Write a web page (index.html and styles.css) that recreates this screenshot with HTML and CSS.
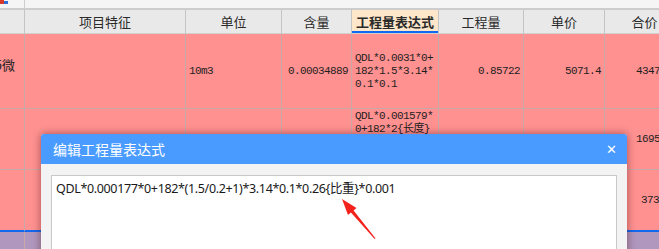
FILE: index.html
```html
<!DOCTYPE html>
<html lang="zh-CN">
<head>
  <meta charset="UTF-8" />
  <title>编辑工程量表达式</title>
  <link rel="stylesheet" href="styles.css">
</head>
<body>
  <!-- Spreadsheet behind the dialog -->
  <div class="sheet">
    <div class="toolbar">
      <div class="tb-cell">
        <svg class="tb-icon" width="9" height="5" viewBox="0 0 9 5">
          <rect x="0" y="0" width="4" height="4" fill="#d83a2a" />
          <rect x="4" y="1" width="4" height="3" fill="#2f6fd8" />
        </svg>
      </div>
      <div class="tb-cell"></div>
    </div>

    <div class="grid head">
      <div class="cell"></div>
      <div class="cell">项目特征</div>
      <div class="cell">单位</div>
      <div class="cell">含量</div>
      <div class="cell active">工程量表达式</div>
      <div class="cell">工程量</div>
      <div class="cell">单价</div>
      <div class="cell">合价</div>
    </div>

    <div class="grid row r1">
      <div class="cell first">5微</div>
      <div class="cell"></div>
      <div class="cell left">10m3</div>
      <div class="cell num">0.00034889</div>
      <div class="cell expr">QDL*0.0031*0+<br>182*1.5*3.14*<br>0.1*0.1</div>
      <div class="cell num">0.85722</div>
      <div class="cell num">5071.4</div>
      <div class="cell total">4347.8</div>
    </div>

    <div class="grid row r2">
      <div class="cell"></div>
      <div class="cell"></div>
      <div class="cell"></div>
      <div class="cell"></div>
      <div class="cell expr top">QDL*0.001579*<br>0+182*2{长度}<br>*3.14*0.1*<br>0.1</div>
      <div class="cell"></div>
      <div class="cell"></div>
      <div class="cell total">16951.2</div>
    </div>

    <div class="grid row r3">
      <div class="cell"></div>
      <div class="cell"></div>
      <div class="cell"></div>
      <div class="cell"></div>
      <div class="cell"></div>
      <div class="cell"></div>
      <div class="cell"></div>
      <div class="cell total late">373.5</div>
    </div>

    <div class="grid row r4">
      <div class="cell"></div>
      <div class="cell"></div>
      <div class="cell"></div>
      <div class="cell"></div>
      <div class="cell"></div>
      <div class="cell"></div>
      <div class="cell"></div>
      <div class="cell"></div>
    </div>
  </div>

  <!-- Edit expression dialog -->
  <div class="dialog">
    <div class="dialog-title">
      <span>编辑工程量表达式</span>
      <span class="close">✕</span>
    </div>
    <div class="dialog-body">
      <div class="editor">QDL*0.000177*0+182*(1.5/0.2+1)*3.14*0.1*0.26{比重}*0.001</div>
    </div>
  </div>

  <!-- Red annotation arrow -->
  <svg class="arrow" width="659" height="249" viewBox="0 0 659 249">
    <polygon fill="#f4221c"
      points="342,199 356.5,208 353.6,210.6 375.6,238.4 374.4,238.8 350.9,212.6 348,215" />
  </svg>
</body>
</html>
```

FILE: styles.css
```css
* {
  margin: 0;
  padding: 0;
  box-sizing: border-box;
}

body {
  width: 659px;
  height: 249px;
  overflow: hidden;
  position: relative;
  background: #f5f5f5;
  font-family: "Noto Sans CJK SC", sans-serif;
  color: #222;
}

/* Sheet */
.sheet {
  width: 659px;
  overflow: hidden;
}

.toolbar {
  display: flex;
  height: 10px;
  background: #f5f5f5;
  border-bottom: 2px solid #cdcdcd;
}
.tb-cell {
  width: 25px;
  border-right: 1px solid #cdcdcd;
  position: relative;
  overflow: hidden;
}
.tb-cell + .tb-cell {
  flex: 1;
  border-right: none;
}
.tb-icon {
  display: block;
}

.grid {
  display: grid;
  grid-template-columns: 25px 161px 96px 70px 87px 85px 81px 80px;
  width: 685px;
}

.cell {
  border-right: 1px solid #c4c4c4;
  border-bottom: 1px solid #c4c4c4;
  overflow: hidden;
  white-space: nowrap;
}

.head {
  height: 24px;
  background: #e9e9e9;
}
.head .cell {
  display: flex;
  align-items: center;
  justify-content: center;
  font-size: 13px;
  color: #2a2a2a;
  border-bottom-color: #cfcfcf;
}
.head .cell.active {
  background: #fde6c9;
  font-weight: bold;
  box-shadow: inset 0 -2px 0 #1268ee;
}

.row {
  background: #ff9191;
  font-family: "Liberation Mono", "Noto Sans CJK SC", monospace;
  font-size: 11px;
  letter-spacing: -0.6px;
  color: #1e1e1e;
}
.row .cell {
  display: flex;
  align-items: center;
  border-color: #c9a8a8;
}
.r1 { height: 75px; }
.r2 { height: 61px; }
.r3 { height: 62px; }
.r3 .cell {
  border-bottom: 2px solid #1268ee;
}
.r4 {
  height: 40px;
  background: #b097bd;
}
.r4 .cell {
  border-bottom: none;
}

.row .first {
  justify-content: flex-end;
  padding: 0 9px 14px 0;
  font-family: "Noto Sans CJK SC", sans-serif;
  font-size: 13px;
  letter-spacing: 0;
}
.row .left {
  padding-left: 3px;
}
.row .num {
  justify-content: flex-end;
  padding-right: 3px;
}
.row .expr {
  white-space: normal;
  line-height: 13px;
  padding-left: 3px;
}
.row .expr.top {
  align-items: flex-start;
  padding-top: 1px;
}
.row .total {
  padding-left: 31px;
}
.row .total.late {
  padding-left: 36px;
}

/* Dialog */
.dialog {
  position: absolute;
  left: 41px;
  top: 134px;
  width: 586px;
  height: 150px;
  background: #f3f3f3;
  border-radius: 3px 3px 0 0;
  box-shadow: 0 0 9px rgba(60, 0, 0, 0.45);
  overflow: hidden;
}
.dialog-title {
  height: 30px;
  background: #4a9bff;
  color: #fff;
  font-size: 14px;
  display: flex;
  align-items: center;
  justify-content: space-between;
  padding: 0 10px 0 12px;
}
.close {
  font-family: "DejaVu Sans", sans-serif;
  font-weight: bold;
  font-size: 13px;
}
.dialog-body {
  padding: 11px 10px 0;
}
.editor {
  height: 110px;
  background: #fff;
  border: 1px solid #c8c8c8;
  padding: 4px 4px;
  font-family: "Noto Sans", "Noto Sans CJK SC", sans-serif;
  font-size: 12.5px;
  letter-spacing: -0.35px;
  line-height: 17px;
  color: #1a1a1a;
}

.arrow {
  position: absolute;
  left: 0;
  top: 0;
  pointer-events: none;
}
```
